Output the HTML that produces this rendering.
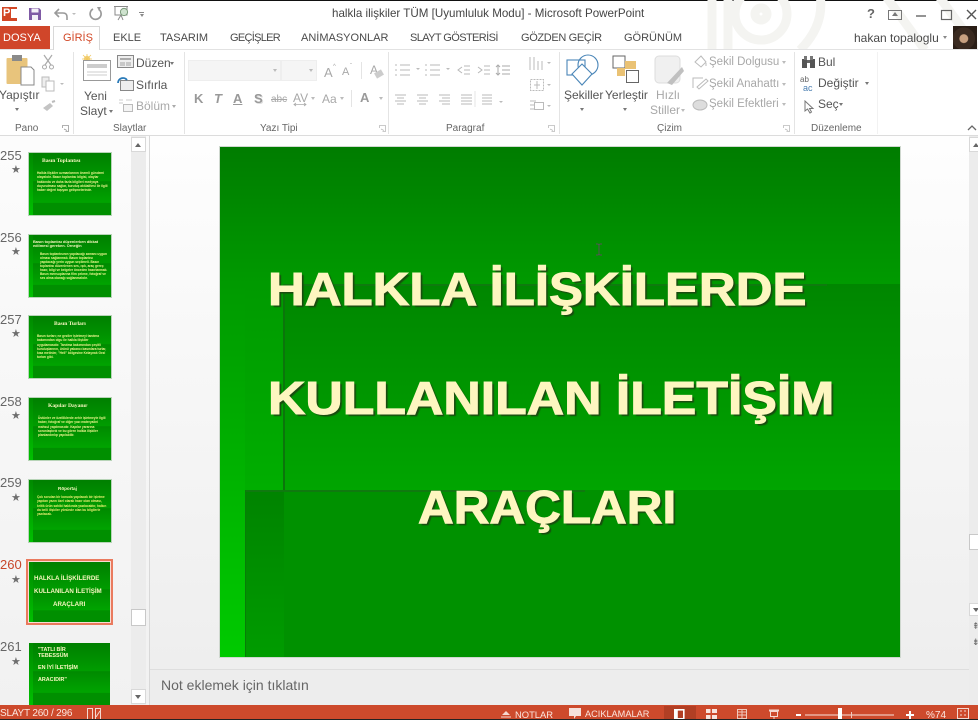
<!DOCTYPE html>
<html lang="tr">
<head>
<meta charset="utf-8">
<title>halkla ilişkiler TÜM</title>
<style>
html,body{margin:0;padding:0;width:978px;height:720px;overflow:hidden;background:#fff}
body{position:relative;font-family:"Liberation Sans",sans-serif;color:#555}
.a{position:absolute}
.t{position:absolute;white-space:nowrap;line-height:1}
.tab{position:absolute;top:32px;font-size:11px;color:#4a4a4a;white-space:nowrap;line-height:12px}
.dis{color:#a8a8a8}
.grp{position:absolute;top:123px;font-size:10px;color:#666;white-space:nowrap;line-height:11px}
.sep{position:absolute;top:52px;width:1px;height:82px;background:#e4e4e4}
.rib{position:absolute;font-size:12px;color:#555;white-space:nowrap;line-height:13px}
.rib.dis{color:#a8a8a8}
.rib.sk{font-size:11.5px}
.th{position:absolute;left:28px;width:82px;height:62px;background:linear-gradient(180deg,#007f00 0%,#009c00 45%,#008a00 46%,#00a400 80%,#008f00 81%);border:1px solid #b8d4b8;overflow:hidden}
.th i{position:absolute;left:0;top:0;bottom:0;width:4px;background:linear-gradient(180deg,#008a00,#00c000)}
.th b{position:absolute;font-family:"Liberation Serif",serif;font-size:5.6px;color:#f8f8c0;white-space:nowrap;line-height:5px}
.th span{position:absolute;font-size:3.2px;font-weight:bold;line-height:4.3px;color:#eaf48c;white-space:normal}
.num{position:absolute;left:0;width:20px;text-align:right;font-size:13px;line-height:14px;color:#666;white-space:nowrap}
.star{position:absolute;left:11px;font-size:11px;line-height:11px;color:#6e6e6e}
.h1{position:absolute;font-family:"Liberation Sans",sans-serif;font-weight:bold;font-size:46px;line-height:47px;color:#fdf6c0;-webkit-text-stroke:1px #fdf6c0;text-shadow:2px 2px 1px #1b4a10;white-space:nowrap;transform-origin:0 50%}
</style>
</head>
<body>
<!-- top black line -->
<div class="a" style="left:0;top:0;width:978px;height:1px;background:#111"></div>

<!-- title bar watermark -->
<svg class="a" style="left:700px;top:0" width="278" height="50" viewBox="0 0 278 50">
<g fill="none" stroke="#f4f4f1" stroke-width="9">
<circle cx="61" cy="14" r="26"/><circle cx="61" cy="14" r="6"/><path d="M12 0V50M28 0V50M185 -5L225 50M238 -5L278 50M120 -5Q125 25 100 50"/>
</g>
</svg>

<!-- QAT -->
<div class="a" style="left:2px;top:7px;width:15px;height:14px;background:#d24726"></div>
<div class="t" style="left:3px;top:8px;font-size:11px;font-weight:bold;color:#fff">P</div>
<div class="a" style="left:11px;top:9px;width:6px;height:9px;background:#fff"></div>
<svg class="a" style="left:28px;top:7px" width="14" height="14" viewBox="0 0 14 14"><path d="M1 1H11L13 3V13H1Z" fill="#7f5aa5"/><rect x="3.5" y="1.5" width="7" height="4" fill="#f4f0f8"/><rect x="4" y="8" width="6" height="5" fill="#f4f0f8"/></svg>
<svg class="a" style="left:53px;top:7px" width="24" height="14" viewBox="0 0 24 14"><path d="M3 6H10Q14 6 14 10V13M6 2L2 6L6 10" fill="none" stroke="#9a9a9a" stroke-width="1.6"/><path d="M19 6h4l-2 2z" fill="#bbb"/></svg>
<svg class="a" style="left:88px;top:6px" width="15" height="15" viewBox="0 0 15 15"><path d="M5 3A5.5 5.5 0 1 0 11 3.5" fill="none" stroke="#9a9a9a" stroke-width="1.7"/><path d="M9 1L13 1L11 5Z" fill="#9a9a9a"/></svg>
<svg class="a" style="left:113px;top:5px" width="18" height="16" viewBox="0 0 18 16"><path d="M1 1.5H15M2 2V10H14V2" fill="none" stroke="#8a8a8a"/><circle cx="11" cy="7" r="3.6" fill="#cfe3cf" stroke="#7a9a7a"/><path d="M8 10L5 15M8 10L10 15" stroke="#8a8a8a"/></svg>
<div class="a" style="left:139px;top:12px;width:5px;height:1px;background:#888"></div>
<div class="a" style="left:140px;top:14px;border:2.5px solid transparent;border-top:3px solid #888;border-bottom:0"></div>

<div class="t" style="left:332px;top:8px;font-size:11.6px;color:#444">halkla ilişkiler TÜM [Uyumluluk Modu] - Microsoft PowerPoint</div>

<!-- window controls -->
<div class="t" style="left:867px;top:7px;font-size:13px;color:#666;font-weight:bold">?</div>
<svg class="a" style="left:888px;top:8px" width="90" height="14" viewBox="0 0 90 14"><rect x="0.5" y="2.5" width="13" height="9" fill="none" stroke="#777"/><path d="M7 4L4 8H10Z" fill="#777"/><path d="M28 8H38" stroke="#666" stroke-width="1.4"/><rect x="53.5" y="2.5" width="10" height="9" fill="none" stroke="#666" stroke-width="1.2"/></svg>
<svg class="a" style="left:966px;top:9px" width="12" height="12" viewBox="0 0 12 12"><path d="M1 1L10 10M10 1L1 10" stroke="#555" stroke-width="1.4"/></svg>

<!-- tabs -->
<div class="a" style="left:0;top:26px;width:50px;height:24px;background:#d0462a"></div>
<div class="tab" style="left:3px;color:#fff">DOSYA</div>
<div class="a" style="left:53px;top:26px;width:47px;height:24px;background:#fff;border:1px solid #d8d8d8;border-bottom:0;box-sizing:border-box"></div>
<div class="tab" style="left:63px;color:#d24726">GİRİŞ</div>
<div class="tab" style="left:113px">EKLE</div>
<div class="tab" style="left:160px">TASARIM</div>
<div class="tab" style="left:230px;letter-spacing:-.7px">GEÇİŞLER</div>
<div class="tab" style="left:301px">ANİMASYONLAR</div>
<div class="tab" style="left:410px;letter-spacing:-.6px">SLAYT GÖSTERİSİ</div>
<div class="tab" style="left:521px;letter-spacing:-.35px">GÖZDEN GEÇİR</div>
<div class="tab" style="left:624px">GÖRÜNÜM</div>
<div class="tab" style="left:854px;font-size:12px">hakan topaloglu</div>
<div class="a" style="left:943px;top:36px;border:2.5px solid transparent;border-top:3px solid #888;border-bottom:0"></div>
<div class="a" style="left:953px;top:26px;width:24px;height:23px;background:radial-gradient(circle at 45% 55%,#c8a080 0 22%,#3a2a20 26% 60%,#2a1e16 62%),#2a1e16"></div>
<div class="a" style="left:0;top:49px;width:53px;height:1px;background:#e2e2e2"></div>
<div class="a" style="left:100px;top:49px;width:878px;height:1px;background:#e2e2e2"></div>

<!-- ribbon -->
<div class="sep" style="left:73px"></div>
<div class="sep" style="left:184px"></div>
<div class="sep" style="left:388px"></div>
<div class="sep" style="left:559px"></div>
<div class="sep" style="left:794px"></div>
<div class="sep" style="left:877px;background:#f2f2f2"></div>

<!-- Pano -->
<svg class="a" style="left:6px;top:54px" width="30" height="34" viewBox="0 0 30 34"><rect x="0.5" y="4" width="21" height="26" rx="1" fill="#e8c47c"/><rect x="6" y="1" width="10" height="6" fill="#8a8a8a"/><path d="M15 13H25L28 16V31H15Z" fill="#fff" stroke="#888"/></svg>
<div class="rib" style="left:-1px;top:89px">Yapıştır</div>
<div class="a" style="left:15px;top:108px;border:2.5px solid transparent;border-top:3px solid #777;border-bottom:0"></div>
<svg class="a" style="left:41px;top:54px" width="14" height="16" viewBox="0 0 14 16"><path d="M3 1L10 11M11 1L4 11" stroke="#aaa" stroke-width="1.2"/><circle cx="3.5" cy="13" r="2" fill="none" stroke="#aaa"/><circle cx="10.5" cy="13" r="2" fill="none" stroke="#aaa"/></svg>
<svg class="a" style="left:41px;top:76px" width="24" height="16" viewBox="0 0 24 16"><rect x="1" y="1" width="7" height="10" fill="#eee" stroke="#bbb"/><rect x="5" y="5" width="8" height="10" fill="#fff" stroke="#bbb"/><path d="M19 7h4l-2 2z" fill="#bbb"/></svg>
<svg class="a" style="left:42px;top:100px" width="14" height="12" viewBox="0 0 14 12"><path d="M1 8L8 3L11 6L5 11Z" fill="#c4c4c4"/><path d="M10 2L13 1" stroke="#bbb" stroke-width="2"/></svg>
<div class="grp" style="left:15px">Pano</div>
<svg class="a" style="left:62px;top:125px" width="7" height="7" viewBox="0 0 7 7"><path d="M.5 3V.5H6.5V6.5H3.5M2 4L5 5.5" fill="none" stroke="#999" stroke-width=".8"/></svg>

<!-- Slaytlar -->
<svg class="a" style="left:80px;top:54px" width="32" height="28" viewBox="0 0 32 28"><circle cx="7" cy="5" r="3.2" fill="#f4d27a"/><path d="M7 0V10M2 5H12M3 1L11 9M11 1L3 9" stroke="#f0c860" stroke-width=".8"/><rect x="3.5" y="6.5" width="27" height="20" fill="#fff" stroke="#999"/><rect x="7" y="10" width="20" height="4" fill="#ccc"/><path d="M7 18H27M7 21H27" stroke="#ccc"/></svg>
<div class="rib" style="left:84px;top:90px">Yeni</div>
<div class="rib" style="left:80px;top:105px">Slayt</div>
<div class="a" style="left:109px;top:110px;border:2.5px solid transparent;border-top:3px solid #777;border-bottom:0"></div>
<svg class="a" style="left:117px;top:55px" width="17" height="14" viewBox="0 0 17 14"><rect x=".5" y=".5" width="16" height="12" fill="#eee" stroke="#888"/><rect x="3" y="3" width="11" height="2" fill="#aaa"/><rect x="3" y="7" width="5" height="4" fill="#c8c8c8"/><rect x="9" y="7" width="5" height="4" fill="#c8c8c8"/></svg>
<div class="rib" style="left:136px;top:57px">Düzen</div>
<div class="a" style="left:170px;top:62px;border:2.5px solid transparent;border-top:3px solid #777;border-bottom:0"></div>
<svg class="a" style="left:117px;top:77px" width="17" height="14" viewBox="0 0 17 14"><rect x="3.5" y="3.5" width="13" height="10" fill="#eee" stroke="#888"/><path d="M1 6A5 5 0 0 1 10 3" fill="none" stroke="#2a7ab8" stroke-width="1.8"/></svg>
<div class="rib" style="left:136px;top:79px">Sıfırla</div>
<svg class="a" style="left:118px;top:99px" width="15" height="14" viewBox="0 0 15 14"><path d="M1 1h4M8 1h6M1 4h4" stroke="#ccc"/><rect x="5.5" y="5.5" width="9" height="7" fill="#f4f4f4" stroke="#bbb"/></svg>
<div class="rib dis" style="left:136px;top:100px">Bölüm</div>
<div class="a" style="left:172px;top:105px;border:2.5px solid transparent;border-top:3px solid #aaa;border-bottom:0"></div>
<div class="grp" style="left:113px">Slaytlar</div>

<!-- Yazı Tipi -->
<div class="a" style="left:188px;top:60px;width:93px;height:21px;background:#f5f5f5;border:1px solid #eee;box-sizing:border-box"></div>
<div class="a" style="left:281px;top:60px;width:36px;height:21px;background:#f5f5f5;border:1px solid #eee;box-sizing:border-box"></div>
<div class="a" style="left:273px;top:69px;border:2.5px solid transparent;border-top:3px solid #bbb;border-bottom:0"></div>
<div class="a" style="left:309px;top:69px;border:2.5px solid transparent;border-top:3px solid #bbb;border-bottom:0"></div>
<div class="t dis" style="left:324px;top:66px;font-size:13px">A</div><div class="t dis" style="left:333px;top:64px;font-size:6px">^</div>
<div class="t dis" style="left:342px;top:67px;font-size:11px">A</div><div class="t dis" style="left:350px;top:64px;font-size:6px">ˇ</div>
<div class="a" style="left:361px;top:62px;width:1px;height:17px;background:#e4e4e4"></div>
<div class="t dis" style="left:370px;top:64px;font-size:12px">A</div>
<div class="a" style="left:375px;top:71px;width:8px;height:6px;background:#ccc;transform:rotate(-30deg)"></div>
<div class="t dis" style="left:194px;top:92px;font-size:13px;font-weight:bold;color:#999">K</div>
<div class="t dis" style="left:214px;top:92px;font-size:13px;font-style:italic;font-weight:bold;color:#999">T</div>
<div class="t dis" style="left:233px;top:92px;font-size:13px;font-weight:bold;text-decoration:underline;color:#999">A</div>
<div class="t dis" style="left:254px;top:92px;font-size:13px;font-weight:bold;color:#999;text-shadow:1px 1px 0 #ddd">S</div>
<div class="t dis" style="left:271px;top:95px;font-size:10px;text-decoration:line-through">abc</div>
<div class="t dis" style="left:293px;top:92px;font-size:12px">AV</div>
<svg class="a" style="left:293px;top:102px" width="14" height="5" viewBox="0 0 14 5"><path d="M1 2.5H13M3 1L1 2.5L3 4M11 1L13 2.5L11 4" fill="none" stroke="#aaa" stroke-width=".8"/></svg>
<div class="a" style="left:311px;top:97px;border:2.5px solid transparent;border-top:3px solid #bbb;border-bottom:0"></div>
<div class="t dis" style="left:322px;top:93px;font-size:12px">Aa</div>
<div class="a" style="left:340px;top:97px;border:2.5px solid transparent;border-top:3px solid #bbb;border-bottom:0"></div>
<div class="a" style="left:351px;top:90px;width:1px;height:17px;background:#e4e4e4"></div>
<div class="t" style="left:360px;top:91px;font-size:13px;font-weight:bold;color:#9a9a9a">A</div>
<div class="a" style="left:379px;top:97px;border:2.5px solid transparent;border-top:3px solid #bbb;border-bottom:0"></div>
<div class="grp" style="left:260px">Yazı Tipi</div>
<svg class="a" style="left:379px;top:125px" width="7" height="7" viewBox="0 0 7 7"><path d="M.5 3V.5H6.5V6.5H3.5M2 4L5 5.5" fill="none" stroke="#bbb" stroke-width=".8"/></svg>

<!-- Paragraf -->
<svg class="a" style="left:394px;top:61px" width="160" height="52" viewBox="0 0 160 52" fill="none" stroke="#b8b8b8">
<path d="M6 4H16M6 9H16M6 14H16M1 4H3M1 9H3M1 14H3"/><path d="M22 7h4l-2 2z" fill="#bbb" stroke="none"/>
<path d="M36 4H46M36 9H46M36 14H46M31 4H33M31 9H33M31 14H33"/><path d="M52 7h4l-2 2z" fill="#bbb" stroke="none"/>
<path d="M70 5H76M70 9H76M70 13H76M68 6L64 9L68 12"/><path d="M90 5H96M90 9H96M90 13H96M84 6L88 9L84 12"/>
<path d="M108 5H116M108 9H116M108 13H116M104 4V14M102 6L104 4L106 6M102 12L104 14L106 12" stroke="#aaa"/>
<path d="M1 34H12M3 37H10M1 40H12M3 43H10"/><path d="M23 34H34M25 37H32M23 40H34M25 43H32"/><path d="M45 34H56M48 37H56M45 40H56M48 43H56"/><path d="M67 34H78M67 37H78M67 40H78M67 43H78"/>
<path d="M81 30V46" stroke="#e4e4e4"/><path d="M88 34H98M88 37H98M88 40H98M88 43H98"/><path d="M105 40h4l-2 2z" fill="#bbb" stroke="none"/>
</svg>
<svg class="a" style="left:528px;top:55px" width="26" height="62" viewBox="0 0 26 62" fill="none" stroke="#bbb">
<path d="M2 2V15M6 2V15M10 6V15M14 6V15"/><path d="M19 7h4l-2 2z" fill="#bbb" stroke="none"/>
<rect x="2.5" y="24.5" width="13" height="11" stroke-dasharray="2 1"/><path d="M9 26V34M6 30H12"/><path d="M19 29h4l-2 2z" fill="#bbb" stroke="none"/>
<rect x="6.5" y="47.5" width="9" height="7"/><path d="M2 46H8M2 50H6M2 54H6"/><path d="M19 50h4l-2 2z" fill="#bbb" stroke="none"/>
</svg>
<div class="grp" style="left:446px">Paragraf</div>
<svg class="a" style="left:548px;top:125px" width="7" height="7" viewBox="0 0 7 7"><path d="M.5 3V.5H6.5V6.5H3.5M2 4L5 5.5" fill="none" stroke="#bbb" stroke-width=".8"/></svg>

<!-- Çizim -->
<svg class="a" style="left:566px;top:54px" width="34" height="32" viewBox="0 0 34 32" fill="none" stroke="#4a86b8" stroke-width="1.1"><rect x="1" y="6" width="18" height="15"/><circle cx="22" cy="11" r="10"/><path d="M16 10L26 20L16 31L6 20Z" fill="#fff"/></svg>
<div class="rib" style="left:564px;top:89px">Şekiller</div>
<div class="a" style="left:580px;top:108px;border:2.5px solid transparent;border-top:3px solid #777;border-bottom:0"></div>
<svg class="a" style="left:612px;top:55px" width="28" height="28" viewBox="0 0 28 28"><rect x="1" y="1" width="12" height="12" fill="#fff" stroke="#666"/><rect x="13" y="6" width="11" height="8" fill="#eac274"/><rect x="5" y="13" width="8" height="8" fill="#eac274"/><rect x="14.5" y="15.5" width="12" height="12" fill="#fff" stroke="#666"/></svg>
<div class="rib" style="left:605px;top:89px">Yerleştir</div>
<div class="a" style="left:623px;top:108px;border:2.5px solid transparent;border-top:3px solid #777;border-bottom:0"></div>
<svg class="a" style="left:654px;top:55px" width="30" height="32" viewBox="0 0 30 32"><rect x="1" y="1" width="25" height="27" rx="4" fill="#f0f0f0" stroke="#ddd"/><path d="M13 28L28 12L30 16L18 30Z" fill="#c0c0c0"/></svg>
<div class="rib dis" style="left:656px;top:89px">Hızlı</div>
<div class="rib dis" style="left:650px;top:104px">Stiller</div>
<div class="a" style="left:681px;top:109px;border:2.5px solid transparent;border-top:3px solid #bbb;border-bottom:0"></div>
<svg class="a" style="left:692px;top:54px" width="17" height="60" viewBox="0 0 17 60" fill="none" stroke="#bbb"><path d="M3 8L9 2L14 8L9 13Z"/><path d="M14 9V12"/><path d="M1 34V24H11M5 33L14 25L16 27L7 35Z"/><ellipse cx="8" cy="51" rx="7" ry="5" fill="#ddd"/></svg>
<div class="rib dis sk" style="left:709px;top:56px">Şekil Dolgusu</div>
<div class="a" style="left:782px;top:61px;border:2.5px solid transparent;border-top:3px solid #bbb;border-bottom:0"></div>
<div class="rib dis sk" style="left:709px;top:78px">Şekil Anahattı</div>
<div class="a" style="left:782px;top:83px;border:2.5px solid transparent;border-top:3px solid #bbb;border-bottom:0"></div>
<div class="rib dis sk" style="left:709px;top:98px">Şekil Efektleri</div>
<div class="a" style="left:782px;top:103px;border:2.5px solid transparent;border-top:3px solid #bbb;border-bottom:0"></div>
<div class="grp" style="left:657px">Çizim</div>
<svg class="a" style="left:783px;top:125px" width="7" height="7" viewBox="0 0 7 7"><path d="M.5 3V.5H6.5V6.5H3.5M2 4L5 5.5" fill="none" stroke="#bbb" stroke-width=".8"/></svg>

<!-- Düzenleme -->
<svg class="a" style="left:801px;top:55px" width="15" height="14" viewBox="0 0 15 14"><rect x="1" y="4" width="5" height="9" fill="#555"/><rect x="9" y="4" width="5" height="9" fill="#555"/><rect x="3" y="1" width="3" height="4" fill="#777"/><rect x="9" y="1" width="3" height="4" fill="#777"/><rect x="6" y="5" width="3" height="3" fill="#666"/></svg>
<div class="rib" style="left:818px;top:56px">Bul</div>
<div class="t" style="left:800px;top:76px;font-size:8px;color:#666">ab</div>
<div class="t" style="left:803px;top:84px;font-size:9px;color:#4a7eb0">ac</div>
<div class="rib" style="left:818px;top:77px">Değiştir</div>
<div class="a" style="left:865px;top:82px;border:2.5px solid transparent;border-top:3px solid #777;border-bottom:0"></div>
<svg class="a" style="left:803px;top:100px" width="12" height="14" viewBox="0 0 12 14"><path d="M2 1V11L4.5 9L7 13L8.5 12L6.5 8.5H10Z" fill="#fff" stroke="#777"/></svg>
<div class="rib" style="left:818px;top:98px">Seç</div>
<div class="a" style="left:839px;top:103px;border:2.5px solid transparent;border-top:3px solid #777;border-bottom:0"></div>
<div class="grp" style="left:811px">Düzenleme</div>
<svg class="a" style="left:967px;top:124px" width="10" height="7" viewBox="0 0 10 7"><path d="M1 6L5 2L9 6" fill="none" stroke="#666" stroke-width="1.3"/></svg>
<div class="a" style="left:0;top:135px;width:978px;height:1px;background:#dcdcdc"></div>

<!-- left pane -->
<div class="a" style="left:0;top:136px;width:149px;height:569px;background:linear-gradient(180deg,#fcfcfc,#f1f1f1)"></div>
<div class="a" style="left:131px;top:136px;width:15px;height:569px;background:#ececec"></div>
<div class="a" style="left:131px;top:137px;width:15px;height:15px;background:#fff;border:1px solid #d8d8d8;box-sizing:border-box"></div>
<div class="a" style="left:135px;top:143px;border:3.5px solid transparent;border-bottom:4px solid #666;border-top:0"></div>
<div class="a" style="left:131px;top:609px;width:15px;height:17px;background:#fff;border:1px solid #c8c8c8;box-sizing:border-box"></div>
<div class="a" style="left:131px;top:689px;width:15px;height:15px;background:#fff;border:1px solid #d8d8d8;box-sizing:border-box"></div>
<div class="a" style="left:135px;top:695px;border:3.5px solid transparent;border-top:4px solid #666;border-bottom:0"></div>
<div class="a" style="left:149px;top:136px;width:1px;height:569px;background:#d8d8d8"></div>

<!-- thumbs -->
<div class="num" style="top:149px">255</div><div class="star" style="top:165px">★</div>
<div class="th" style="top:152px"><i></i><b style="left:13px;top:6px">Basın Toplantısı</b><span style="left:8px;top:18px;width:72px">Halkla ilişkiler uzmanlarının önemli gündemi olayalıdır. Basın toplantısı bilgisi, olaylar hakkında ve daha fazla bilgileri medyaya duyurulması sağlar, kuruluş aktüalitesi ile ilgili haber değeri taşıyan gelişmelerinde.</span></div>
<div class="num" style="top:231px">256</div><div class="star" style="top:247px">★</div>
<div class="th" style="top:234px"><i></i><b style="left:4px;top:5px;font-family:'Liberation Sans',sans-serif;font-size:3.9px;white-space:normal;width:72px;line-height:4.2px">Basın toplantısı düzenlerken dikkat edilmesi gereken. Örneğin</b><span style="left:11px;top:17px;width:68px;line-height:4px">Basın toplantısının yapılacağı zamanı uygun olması sağlanmalı. Basın toplantısı yapılacağı yerin uygun seçilmeli. Basın toplantısı düzenlenen ses, ışık, araç gereç hazır, bilgi ve belgeler önceden hazırlanmalı. Basın mensuplarına film çekme, fotoğraf ve ses alma olanağı sağlanmalıdır.</span></div>
<div class="num" style="top:313px">257</div><div class="star" style="top:329px">★</div>
<div class="th" style="top:315px"><i></i><b style="left:25px;top:6px">Basın Turları</b><span style="left:8px;top:18px;width:73px">Basın turları; ne geziler işletmeyi tanıtma bakımından olgu ile halkla ilişkiler uygulamasıdır. Tanıtma bakımından çeşitli kuruluşlarının, ürünü yabancı basınlara turlar, kısa metinler, "Hell" bölgesine Kelaynak Gezi turları gibi.</span></div>
<div class="num" style="top:395px">258</div><div class="star" style="top:411px">★</div>
<div class="th" style="top:397px"><i></i><b style="left:19px;top:6px">Kapılar Dayanır</b><span style="left:9px;top:18px;width:72px">Üstünler ve özelliklerde zehir işletmeyle ilgili haber, fotoğraf ve diğer yazı materyalini mahsul yapılmasıdır. Kapılar yararına sorunlaştırdı ve bu gören halkla ilişkiler planlandırılıp yapılabilir.</span></div>
<div class="num" style="top:476px">259</div><div class="star" style="top:493px">★</div>
<div class="th" style="top:479px"><i></i><b style="left:29px;top:6px;font-family:'Liberation Sans',sans-serif;font-size:4.6px">Röportaj</b><span style="left:8px;top:15px;width:73px;color:#e8f070">Çok sorulan bir konuda yapılacak bir işletme yapılan yazın özel olarak hazır olan olması, kritik ürün sahibi hakkında yazılacaktır, halkın da belli ilişkiler yönünde olan bu bilgilerle yazılacak.</span></div>
<div class="a" style="left:26px;top:559px;width:87px;height:66px;border:2px solid #ea7a5e;box-sizing:border-box;background:#f8dcd4"></div>
<div class="num" style="top:558px;color:#c8472a">260</div><div class="star" style="top:575px">★</div>
<div class="th" style="top:562px;height:60px;border:0;left:29px;width:81px"><i></i><b style="left:5px;top:14px;font-family:'Liberation Sans',sans-serif;font-size:6.2px;line-height:6px;font-weight:bold">HALKLA İLİŞKİLERDE</b><b style="left:5px;top:27px;font-family:'Liberation Sans',sans-serif;font-size:6.2px;line-height:6px;font-weight:bold">KULLANILAN İLETİŞİM</b><b style="left:24px;top:40px;font-family:'Liberation Sans',sans-serif;font-size:6.2px;line-height:6px;font-weight:bold">ARAÇLARI</b></div>
<div class="num" style="top:640px">261</div><div class="star" style="top:657px">★</div>
<div class="th" style="top:643px;height:62px;border:0;left:29px;width:81px"><i></i><b style="left:9px;top:4px;font-size:5.4px;line-height:6px;font-family:'Liberation Sans',sans-serif;font-weight:bold">"TATLI BİR<br>TEBESSÜM</b><b style="left:9px;top:22px;font-size:5.4px;line-height:6px;font-family:'Liberation Sans',sans-serif">EN İYİ İLETİŞİM</b><b style="left:9px;top:34px;font-size:5.4px;line-height:6px;font-family:'Liberation Sans',sans-serif">ARACIDIR"</b></div>

<!-- main area -->
<div class="a" style="left:150px;top:136px;width:819px;height:534px;background:linear-gradient(180deg,#fefefe,#eeeeee)"></div>
<div class="a" style="left:969px;top:136px;width:9px;height:569px;background:#ececec"></div>
<div class="a" style="left:969px;top:137px;width:9px;height:15px;background:#fff;border:1px solid #d8d8d8;border-right:0;box-sizing:border-box"></div>
<div class="a" style="left:973px;top:143px;border:3.5px solid transparent;border-bottom:4px solid #666;border-top:0"></div>
<div class="a" style="left:969px;top:534px;width:9px;height:16px;background:#fff;border:1px solid #c8c8c8;border-right:0;box-sizing:border-box"></div>
<div class="a" style="left:969px;top:603px;width:9px;height:13px;background:#fff;border:1px solid #d8d8d8;border-right:0;box-sizing:border-box"></div>
<div class="a" style="left:973px;top:608px;border:3.5px solid transparent;border-top:4px solid #666;border-bottom:0"></div>
<div class="t" style="left:972px;top:622px;font-size:9px;line-height:9px;color:#666">⇞</div>
<div class="t" style="left:972px;top:638px;font-size:9px;line-height:9px;color:#666">⇟</div>

<!-- slide -->
<div class="a" style="left:220px;top:147px;width:680px;height:510px;background:#009100;overflow:hidden;outline:1px solid #cfd8cf">
  <div class="a" style="left:0;top:0;width:680px;height:137px;background:linear-gradient(180deg,#007c00,#009a00)"></div>
  <div class="a" style="left:0;top:137px;width:680px;height:206px;background:linear-gradient(180deg,#008600,#00a500)"></div>
  <div class="a" style="left:0;top:343px;width:680px;height:167px;background:#009100"></div>
  <div class="a" style="left:0;top:137px;width:64px;height:206px;background:linear-gradient(180deg,#009a00,#00ae00)"></div>
  <div class="a" style="left:0;top:137px;width:25px;height:373px;background:linear-gradient(180deg,#009a00,#00ca00)"></div>
  <div class="a" style="left:25px;top:343px;width:39px;height:167px;background:linear-gradient(180deg,#008300,#009c00)"></div>
  <div class="a" style="left:63px;top:137px;width:2px;height:206px;background:#0b760b"></div>
  <div class="a" style="left:63px;top:137px;width:544px;height:2px;background:#0f7a0f"></div>
  <div class="a" style="left:25px;top:343px;width:340px;height:2px;background:#0f7a0f"></div>
  <div class="a" style="left:25px;top:343px;width:1px;height:167px;background:#087c08"></div>
</div>
<div class="h1" style="left:268px;top:266px;transform:scaleX(1.107)">HALKLA İLİŞKİLERDE</div>
<div class="h1" style="left:268px;top:375px;transform:scaleX(1.125)">KULLANILAN İLETİŞİM</div>
<div class="h1" style="left:418px;top:484px;transform:scaleX(1.075)">ARAÇLARI</div>

<!-- cursor -->
<svg class="a" style="left:595px;top:243px" width="8" height="13" viewBox="0 0 8 13"><path d="M1 1H3L4 2L5 1H7M4 2V11M1 12H3L4 11L5 12H7" fill="none" stroke="#555"/></svg>

<!-- notes -->
<div class="a" style="left:150px;top:669px;width:819px;height:1px;background:#dedede"></div>
<div class="a" style="left:150px;top:670px;width:819px;height:35px;background:#ededed"></div>
<div class="t" style="left:161px;top:678px;font-size:14px;color:#666">Not eklemek için tıklatın</div>

<!-- status -->
<div class="a" style="left:0;top:705px;width:978px;height:15px;background:#cd4a2c"></div>
<div class="a" style="left:664px;top:706px;width:32px;height:14px;background:#b23f24"></div>
<div class="t" style="left:0;top:709px;font-size:10px;letter-spacing:-.2px;color:#fbe6df">SLAYT 260 / 296</div>
<svg class="a" style="left:87px;top:708px" width="15" height="12" viewBox="0 0 15 12" fill="none" stroke="#f5d8d0"><rect x=".5" y=".5" width="5" height="11"/><rect x="8.5" y=".5" width="5" height="11"/><path d="M9 9L13 3"/></svg>
<svg class="a" style="left:500px;top:711px" width="12" height="9" viewBox="0 0 12 9"><path d="M6 0L10 4H2Z" fill="#f5d8d0"/><path d="M1 6H11" stroke="#f5d8d0"/></svg>
<div class="t" style="left:515px;top:710px;font-size:9.4px;color:#fbe6df">NOTLAR</div>
<svg class="a" style="left:569px;top:708px" width="12" height="12" viewBox="0 0 12 12"><path d="M0 0H12V8H7L5 11V8H0Z" fill="#f5e0da"/></svg>
<div class="t" style="left:585px;top:710px;font-size:9.2px;color:#fbe6df">ACIKLAMALAR</div>
<svg class="a" style="left:674px;top:709px" width="220" height="11" viewBox="0 0 220 11">
<rect x=".8" y=".8" width="9" height="9" fill="none" stroke="#fff" stroke-width="1.6"/><rect x=".8" y=".8" width="3" height="9" fill="#fff"/>
<rect x="32" y="0" width="4.5" height="4" fill="#f8e4de"/><rect x="38" y="0" width="5" height="4" fill="#f8e4de"/><rect x="32" y="6" width="4.5" height="4" fill="#f8e4de"/><rect x="38" y="6" width="5" height="4" fill="#f8e4de"/>
<rect x="63.5" y=".5" width="9" height="9" fill="none" stroke="#f0c8bc"/><path d="M68 0V10M64 3H72M64 6H72" stroke="#f0c8bc"/>
<rect x="95" y=".5" width="10" height="2" fill="#f5d8d0"/><rect x="96.5" y="2.5" width="7" height="5" fill="none" stroke="#f5d8d0"/><path d="M100 7V10" stroke="#f5d8d0"/>
<path d="M122 6H127" stroke="#fff" stroke-width="2"/><path d="M131 6H226" stroke="#f8e4de"/>
</svg>
<div class="a" style="left:838px;top:708px;width:4px;height:12px;background:#fff"></div>
<div class="a" style="left:851px;top:712px;width:1px;height:6px;background:#f0c8bc"></div>
<svg class="a" style="left:905px;top:710px" width="10" height="10" viewBox="0 0 10 10"><path d="M5 1V9M1 5H9" stroke="#fff" stroke-width="2"/></svg>
<div class="t" style="left:926px;top:711px;font-size:10px;color:#fbe6df">%74</div>
<svg class="a" style="left:957px;top:708px" width="13" height="12" viewBox="0 0 13 12" fill="none" stroke="#f5d8d0"><rect x=".5" y=".5" width="11" height="10"/><path d="M3 3H5M7 3H9M3 7H5M7 7H9"/></svg>
<div class="a" style="left:0;top:719px;width:978px;height:1px;background:#222"></div>
</body>
</html>
